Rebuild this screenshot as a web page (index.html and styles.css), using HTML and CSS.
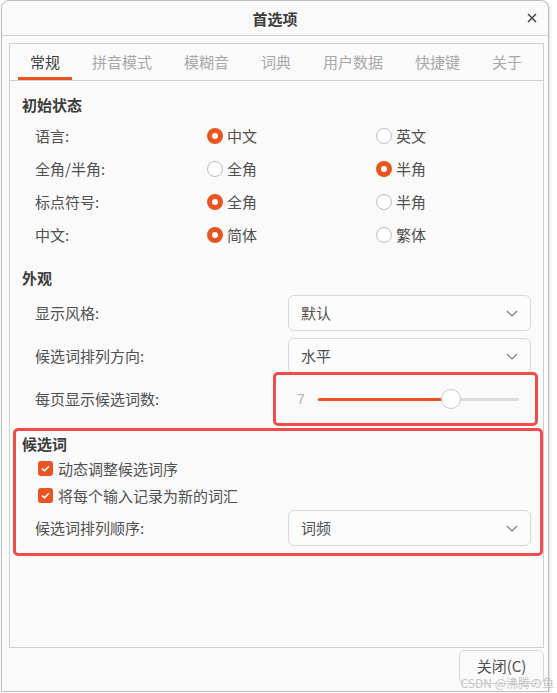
FILE: index.html
```html
<!DOCTYPE html>
<html lang="zh-CN">
<head>
    <meta charset="UTF-8">
    <meta name="viewport" content="width=device-width, initial-scale=1.0">
    <title>首选项</title>
    <link rel="stylesheet" href="styles.css">
</head>
<body>
    <div class="window">
        <header class="titlebar">
            <span class="title">首选项</span>
            <button class="close" aria-label="关闭">
                <svg width="10" height="10" viewBox="0 0 10 10">
                    <path d="M1 1 L9 9 M9 1 L1 9" stroke="#3c3c3c" stroke-width="1.4" fill="none"/>
                </svg>
            </button>
        </header>

        <main class="content">
            <div class="notebook">
                <nav class="tabs">
                    <span class="tab active">常规</span>
                    <span class="tab">拼音模式</span>
                    <span class="tab">模糊音</span>
                    <span class="tab">词典</span>
                    <span class="tab">用户数据</span>
                    <span class="tab">快捷键</span>
                    <span class="tab">关于</span>
                </nav>

                <div class="page">
                    <h2 class="group-title">初始状态</h2>
                    <div class="radio-grid">
                        <span class="label">语言:</span>
                        <label class="radio checked"><span class="dot"></span>中文</label>
                        <label class="radio"><span class="dot"></span>英文</label>

                        <span class="label">全角/半角:</span>
                        <label class="radio"><span class="dot"></span>全角</label>
                        <label class="radio checked"><span class="dot"></span>半角</label>

                        <span class="label">标点符号:</span>
                        <label class="radio checked"><span class="dot"></span>全角</label>
                        <label class="radio"><span class="dot"></span>半角</label>

                        <span class="label">中文:</span>
                        <label class="radio checked"><span class="dot"></span>简体</label>
                        <label class="radio"><span class="dot"></span>繁体</label>
                    </div>

                    <h2 class="group-title appearance-title">外观</h2>
                    <div class="form-row first-combo">
                        <span class="label">显示风格:</span>
                        <div class="combo">默认
                            <svg width="12" height="7" viewBox="0 0 12 7"><path d="M1 1 L6 6 L11 1" stroke="#777" stroke-width="1.2" fill="none"/></svg>
                        </div>
                    </div>
                    <div class="form-row">
                        <span class="label">候选词排列方向:</span>
                        <div class="combo">水平
                            <svg width="12" height="7" viewBox="0 0 12 7"><path d="M1 1 L6 6 L11 1" stroke="#777" stroke-width="1.2" fill="none"/></svg>
                        </div>
                    </div>
                    <div class="form-row slider-row">
                        <span class="label">每页显示候选词数:</span>
                        <div class="slider-box mark">
                            <span class="slider-value">7</span>
                            <div class="slider-track">
                                <div class="slider-fill" style="width: 66%"></div>
                                <span class="slider-knob"></span>
                            </div>
                        </div>
                    </div>

                    <section class="candidates mark">
                        <h2 class="group-title">候选词</h2>
                        <label class="check"><span class="box">
                            <svg width="9" height="7" viewBox="0 0 9 7"><path d="M1 3.5 L3.4 5.8 L8 1.2" stroke="#fff" stroke-width="1.6" fill="none"/></svg>
                        </span>动态调整候选词序</label>
                        <label class="check"><span class="box">
                            <svg width="9" height="7" viewBox="0 0 9 7"><path d="M1 3.5 L3.4 5.8 L8 1.2" stroke="#fff" stroke-width="1.6" fill="none"/></svg>
                        </span>将每个输入记录为新的词汇</label>
                        <div class="form-row order-row">
                            <span class="label">候选词排列顺序:</span>
                            <div class="combo">词频
                                <svg width="12" height="7" viewBox="0 0 12 7"><path d="M1 1 L6 6 L11 1" stroke="#777" stroke-width="1.2" fill="none"/></svg>
                            </div>
                        </div>
                    </section>
                </div>
            </div>

            <div class="actions">
                <button class="btn">关闭(C)</button>
            </div>
        </main>
    </div>
    <div class="watermark">CSDN @沸腾の鱼</div>
</body>
</html>
```

FILE: styles.css
```css
body {
    margin: 0;
    background-color: #ffffff;
    font-family: "Noto Sans CJK SC", "Noto Sans", sans-serif;
    font-size: 15px;
    line-height: 20px;
    color: #505050;
}

.window {
    box-sizing: border-box;
    width: 548px;
    height: 692px;
    margin-left: 1px;
    background-color: #fafafa;
    border: 1px solid #bdbdbd;
    border-radius: 8px 8px 0 0;
    box-shadow: 1px 1px 3px rgba(0, 0, 0, 0.15);
    display: flex;
    flex-direction: column;
}

.titlebar {
    height: 34px;
    border-bottom: 1px solid #d2d2d2;
    display: flex;
    align-items: center;
    justify-content: center;
    position: relative;
}

.title {
    font-weight: bold;
    color: #3c3c3c;
    padding-top: 1px;
}

.close {
    position: absolute;
    right: 10px;
    top: 11px;
    width: 12px;
    height: 12px;
    padding: 0;
    border: none;
    background: none;
    display: flex;
    align-items: center;
    justify-content: center;
}

.content {
    flex: 1;
    display: flex;
    flex-direction: column;
    padding: 7px 4px 7px 7px;
}

.notebook {
    flex: 1;
    border: 1px solid #cfcfcf;
    display: flex;
    flex-direction: column;
}

.tabs {
    height: 36px;
    border-bottom: 1px solid #cfcfcf;
    display: flex;
    gap: 8px;
    padding-left: 8px;
}

.tab {
    box-sizing: border-box;
    height: 36px;
    padding: 2px 12px 0;
    display: flex;
    align-items: center;
    color: #a8a8a8;
    border-bottom: 3px solid transparent;
}

.tab.active {
    color: #3c3c3c;
    border-bottom-color: #e95420;
}

.page {
    padding: 14px 12px 0;
}

.group-title {
    margin: 0;
    font-size: 15px;
    line-height: 20px;
    font-weight: bold;
    color: #3c3c3c;
}

.radio-grid {
    margin: 4px 0 0 13px;
    display: grid;
    grid-template-columns: 172px 169px 1fr;
    grid-auto-rows: 33px;
    align-items: center;
}

.radio {
    display: flex;
    align-items: center;
    gap: 4px;
}

.radio .dot {
    box-sizing: border-box;
    width: 16px;
    height: 16px;
    border-radius: 50%;
    border: 1px solid #bcbcbc;
    background-color: #ffffff;
}

.radio.checked .dot {
    border: 5px solid #e95420;
}

.appearance-title {
    margin-top: 17px;
}

.form-row {
    margin-left: 13px;
    display: grid;
    grid-template-columns: 253px 1fr;
    align-items: center;
    margin-top: 7px;
}

.first-combo {
    margin-top: 7px;
}

.combo {
    box-sizing: border-box;
    height: 36px;
    padding: 0 12px;
    border: 1px solid #d8d8d8;
    border-radius: 6px;
    background-color: #fcfcfc;
    display: flex;
    align-items: center;
    justify-content: space-between;
}

.mark {
    border: 3px solid #f24b4b;
    border-radius: 5px;
}

.slider-row {
    margin-top: -2px;
}

.slider-box {
    box-sizing: border-box;
    height: 54px;
    margin: 0 -7px 0 -15px;
    padding: 0 16px 0 21px;
    display: flex;
    align-items: center;
    gap: 13px;
}

.slider-value {
    color: #b0b0b0;
    font-family: "Liberation Sans", sans-serif;
    font-size: 14px;
}

.slider-track {
    flex: 1;
    height: 3px;
    border-radius: 2px;
    background-color: #dcdcdc;
    position: relative;
}

.slider-fill {
    height: 100%;
    border-radius: 2px;
    background-color: #e95420;
}

.slider-knob {
    position: absolute;
    left: 66%;
    top: 50%;
    width: 20px;
    height: 20px;
    margin: -10px 0 0 -10px;
    box-sizing: border-box;
    border-radius: 50%;
    border: 1px solid #c6c6c6;
    background-color: #ffffff;
}

.candidates {
    margin: 2px -12px 0 -9px;
    padding: 3px 9px 7px 6px;
}

.check {
    height: 27px;
    margin-left: 16px;
    display: flex;
    align-items: center;
    gap: 5px;
}

.check:first-of-type {
    margin-top: 1px;
}

.check .box {
    width: 15px;
    height: 15px;
    border-radius: 3px;
    background-color: #e95420;
    display: flex;
    align-items: center;
    justify-content: center;
}

.order-row {
    margin-top: 1px;
}

.actions {
    display: flex;
    justify-content: flex-end;
    padding-top: 2px;
}

.btn {
    width: 85px;
    height: 34px;
    padding: 0 0 2px;
    font-family: inherit;
    font-size: 15px;
    line-height: 18px;
    color: #505050;
    background-color: #fafafa;
    border: 1px solid #d6d6d6;
    border-radius: 6px;
}

.watermark {
    position: absolute;
    right: 3px;
    top: 677px;
    font-family: "Noto Sans CJK SC", sans-serif;
    font-size: 12px;
    line-height: 12px;
    color: #c4c4c4;
}
```
